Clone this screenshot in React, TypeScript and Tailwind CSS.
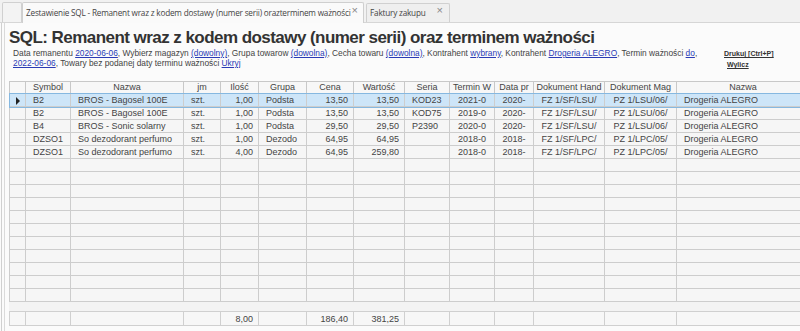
import React from "react";

const cols = [16, 45, 113, 37, 38, 48, 47, 51, 45, 45, 39, 71, 72, 133];
const heads = ["", "Symbol", "Nazwa", "jm", "Ilość", "Grupa", "Cena", "Wartość", "Seria", "Termin W", "Data pr", "Dokument Hand", "Dokument Mag", "Nazwa"];
const align = ["c", "l", "l", "l", "r", "l", "r", "r", "l", "c", "c", "c", "c", "l"];

const rows: string[][] = [
  ["", "B2", "BROS - Bagosel 100E", "szt.", "1,00", "Podsta", "13,50", "13,50", "KOD23", "2021-0", "2020-", "FZ 1/SF/LSU/", "PZ 1/LSU/06/", "Drogeria ALEGRO"],
  ["", "B2", "BROS - Bagosel 100E", "szt.", "1,00", "Podsta", "13,50", "13,50", "KOD75", "2019-0", "2020-", "FZ 1/SF/LSU/", "PZ 1/LSU/06/", "Drogeria ALEGRO"],
  ["", "B4", "BROS - Sonic solarny", "szt.", "1,00", "Podsta", "29,50", "29,50", "P2390", "2020-0", "2020-", "FZ 1/SF/LSU/", "PZ 1/LSU/06/", "Drogeria ALEGRO"],
  ["", "DZSO1", "So dezodorant perfumo", "szt.", "1,00", "Dezodo", "64,95", "64,95", "", "2018-0", "2018-", "FZ 1/SF/LPC/", "PZ 1/LPC/05/", "Drogeria ALEGRO"],
  ["", "DZSO1", "So dezodorant perfumo", "szt.", "4,00", "Dezodo", "64,95", "259,80", "", "2018-0", "2018-", "FZ 1/SF/LPC/", "PZ 1/LPC/05/", "Drogeria ALEGRO"],
];
const empty = Array.from({ length: 11 }, () => Array(14).fill(""));
const totals = ["", "", "", "", "8,00", "", "186,40", "381,25", "", "", "", "", "", ""];

function alignCls(a: string) {
  return a === "r" ? "text-right pr-[5px]" : a === "c" ? "text-center" : "text-left pl-[7px]";
}

function Colgroup() {
  return (
    <colgroup>
      {cols.map((w, i) => (
        <col key={i} style={{ width: w }} />
      ))}
    </colgroup>
  );
}

export default function App() {
  const link = "text-[#2a3bb5] underline";
  return (
    <div className="w-[800px] h-[331px] overflow-hidden bg-[#fbfbfb] text-[#444]" style={{ fontFamily: '"Liberation Sans", Arial, sans-serif' }}>
      {/* tab bar */}
      <div className="h-[23px] flex items-end bg-[#f1f1f1] border-b border-[#d6d6d6] pl-[2px]">
        <div className="h-[20px] w-[20px] border border-b-0 border-[#d0d0d0] bg-[#f3f3f3] rounded-t-[2px]" />
        <div className="h-[21px] w-[342px] border border-b-0 border-[#cfcfcf] bg-[#fafafa] rounded-t-[2px] flex items-center justify-between pl-[3px] pr-[5px] -mb-px">
          <span className="text-[8.2px] tracking-[-0.2px] text-[#444] whitespace-nowrap" style={{ fontFamily: '"Open Sans", sans-serif' }}>
            Zestawienie SQL - Remanent wraz z kodem dostawy (numer serii) orazterminem ważności
          </span>
          <span className="text-[11px] text-[#888] leading-none -mt-[6px]">×</span>
        </div>
        <div className="h-[19px] w-[84px] ml-[2px] border border-b-0 border-[#d0d0d0] bg-[#efefef] rounded-t-[2px] flex items-center justify-between pl-[3px] pr-[6px]">
          <span className="text-[8.2px] tracking-[-0.2px] text-[#444] whitespace-nowrap" style={{ fontFamily: '"Open Sans", sans-serif' }}>
            Faktury zakupu
          </span>
          <span className="text-[11px] text-[#888] leading-none -mt-[6px]">×</span>
        </div>
      </div>

      <div className="ml-[1px] border-l border-[#d0d0d0] h-[308px]">
        <div className="ml-[2px] border-l border-[#dadada] h-full pl-[4px]">
          <div className="text-[17px] font-bold leading-[20px] text-[#333] pt-[5px] tracking-[-0.55px]">
            SQL: Remanent wraz z kodem dostawy (numer serii) oraz terminem ważności
          </div>
          <div className="flex">
            <div className="w-[712px] pl-[4px] text-[8.35px] leading-[10px] text-[#444]">
              Data remanentu <span className={link}>2020-06-06</span>, Wybierz magazyn <span className={link}>(dowolny)</span>, Grupa towarow <span className={link}>(dowolna)</span>, Cecha towaru <span className={link}>(dowolna)</span>, Kontrahent <span className={link}>wybrany</span>, Kontrahent <span className={link}>Drogeria ALEGRO</span>, Termin ważności <span className={link}>do</span>,
              <br />
              <span className={link}>2022-06-06</span>, Towary bez podanej daty terminu ważności <span className={link}>Ukryj</span>
            </div>
            <div className="pl-[3px] pt-0 text-[7px] font-bold leading-[11px] text-[#333]">
              <div className="underline">Drukuj [Ctrl+P]</div>
              <div className="underline pl-[3px]">Wylicz</div>
            </div>
          </div>

          <div className="mt-[11px]">
            <table className="table-fixed border-collapse text-[9px]" style={{ width: 800 }}>
              <Colgroup />
              <thead>
                <tr className="h-[12px]">
                  {heads.map((h, i) => (
                    <th key={i} className="font-normal text-center border border-[#c8c8c8] bg-[#f7f7f7] leading-[11px] whitespace-nowrap overflow-hidden">
                      {h}
                    </th>
                  ))}
                </tr>
              </thead>
              <tbody>
                {rows.map((r, ri) => (
                  <tr key={ri} className={ri === 0 ? "h-[13px] bg-[#cde5f8] outline outline-1 outline-[#86b8e0]" : "h-[13px] bg-[#f6f6f6]"}>
                    {r.map((c, ci) => (
                      <td key={ci} className={`border border-[#cdcdcd] leading-[12px] whitespace-nowrap overflow-hidden ${alignCls(align[ci])}`}>
                        {ci === 0 && ri === 0 ? (
                          <span className="inline-block w-0 h-0 border-y-[4px] border-y-transparent border-l-[4px] border-l-[#222] align-middle" />
                        ) : (
                          c
                        )}
                      </td>
                    ))}
                  </tr>
                ))}
                {empty.map((r, ri) => (
                  <tr key={"e" + ri} className="h-[13px] bg-[#f6f6f6]">
                    {r.map((_c, ci) => (
                      <td key={ci} className="border border-[#cdcdcd]" />
                    ))}
                  </tr>
                ))}
              </tbody>
            </table>
            <div className="h-[9px] bg-[#f3f3f3]" />
            <table className="table-fixed border-collapse text-[9px]" style={{ width: 800 }}>
              <Colgroup />
              <tbody>
                <tr className="h-[14px] bg-[#f7f7f7]">
                  {totals.map((c, ci) => (
                    <td key={ci} className={`border border-[#d0d0d0] leading-[12px] whitespace-nowrap ${alignCls(align[ci])}`}>
                      {c}
                    </td>
                  ))}
                </tr>
              </tbody>
            </table>
          </div>
        </div>
      </div>
    </div>
  );
}
